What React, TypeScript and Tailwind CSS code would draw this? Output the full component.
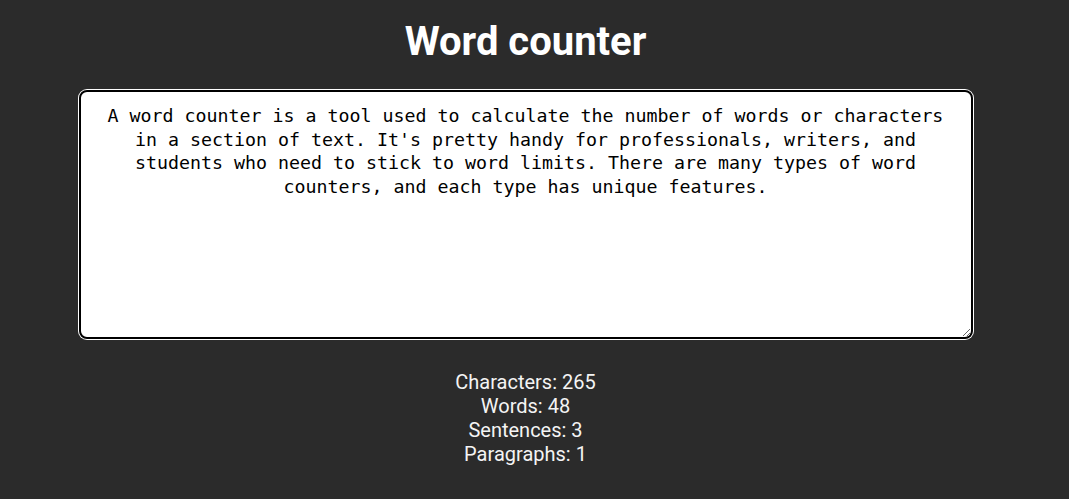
import React, { useEffect, useRef, useState } from "react";

export default function App() {
  const [text, setText] = useState(
    "A word counter is a tool used to calculate the number of words or characters in a section of text. It's pretty handy for professionals, writers, and students who need to stick to word limits. There are many types of word counters, and each type has unique features."
  );
  const ref = useRef<HTMLTextAreaElement>(null);
  useEffect(() => {
    const el = ref.current;
    if (el) {
      el.focus();
      el.setSelectionRange(el.value.length, el.value.length);
    }
  }, []);
  const chars = text.length;
  const words = text.trim() ? text.trim().split(/\s+/).length : 0;
  const sentences = (text.match(/[.!?]+/g) || []).length;
  const paragraphs = text.split(/\n+/).filter((p) => p.trim()).length;
  return (
    <div className="min-h-[499px] w-full bg-[#2b2b2b]">
      <div
        className="w-[1051px] text-white flex flex-col items-center"
        style={{ fontFamily: "Roboto, sans-serif" }}
      >
        <h1 className="mt-[16px] text-[40px] leading-[52px] font-bold text-white">Word counter</h1>
        <textarea
          ref={ref}
          value={text}
          onChange={(e) => setText(e.target.value)}
          spellCheck={false}
          className="mt-[22px] w-[894px] h-[249px] bg-white text-black border-2 border-black rounded-[8px] shadow-[0_0_0_1px_#ffffff] outline-none text-center px-[18px] pt-[12px] pb-[10px] text-[18.27px] leading-[23.5px] resize-y caret-black"
          style={{ fontFamily: "'DejaVu Sans Mono', monospace" }}
        />
        <div className="mt-[31px] flex flex-col items-center text-[20px] leading-[24px] text-[#f4f4f4]">
          <p>Characters: {chars}</p>
          <p>Words: {words}</p>
          <p>Sentences: {sentences}</p>
          <p>Paragraphs: {paragraphs}</p>
        </div>
      </div>
    </div>
  );
}
